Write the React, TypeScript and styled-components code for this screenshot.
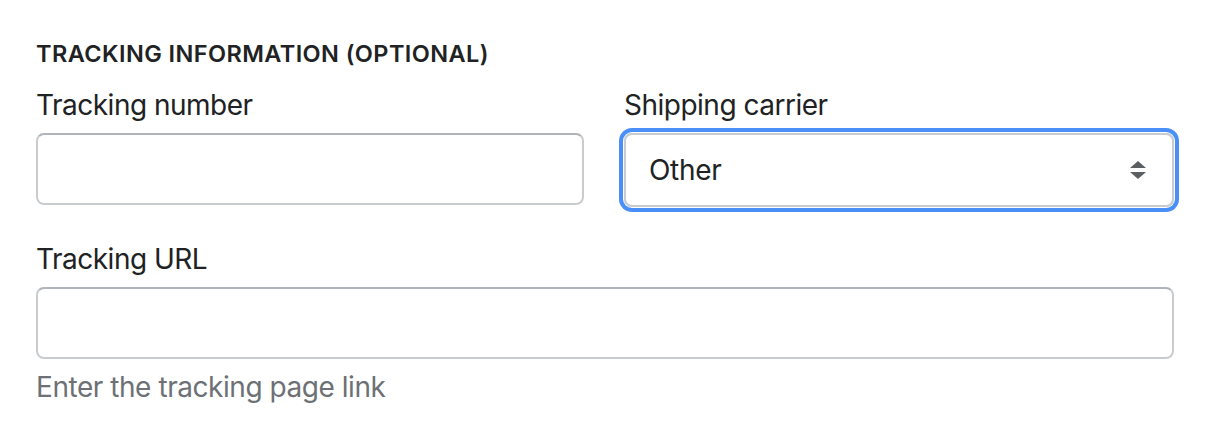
import React from "react";
import styled, { createGlobalStyle } from "styled-components";

const Global = createGlobalStyle`
  html, body { margin: 0; padding: 0; background: #ffffff; }
  body { font-family: Inter, "Noto Sans", "Liberation Sans", sans-serif; color: #202223; }
  * { box-sizing: border-box; }
`;

const Page = styled.div`
  width: 1212px;
  height: 444px;
  padding: 40px 38px 0 36px;
  display: flex;
  flex-direction: column;
`;

const Heading = styled.h2`
  margin: 0 0 17px;
  font-size: 23.5px;
  line-height: 28px;
  font-weight: 600;
  letter-spacing: 0.42px;
  text-transform: uppercase;
`;

const Row = styled.div`
  display: grid;
  grid-template-columns: 548px 1fr;
  column-gap: 40px;
`;

const Field = styled.div<{ $top?: number }>`
  display: flex;
  flex-direction: column;
  margin-top: ${(p) => p.$top ?? 0}px;
`;

const Label = styled.label`
  font-size: 28px;
  line-height: 40px;
  letter-spacing: -0.5px;
  margin-bottom: 8px;
  padding-top: 1px;
  margin-top: -1px;
`;

const Input = styled.input`
  height: 72px;
  width: 100%;
  border: 2px solid #c9cccf;
  border-top-color: #aeb4b9;
  border-radius: 8px;
  background: #fff;
  padding: 0 24px;
  font: inherit;
  font-size: 28px;
  outline: none;
`;

const SelectWrap = styled.div`
  position: relative;
  height: 74px;
  border-radius: 8px;
  box-shadow: 0 0 0 1px #ffffff, 0 0 0 5px #4a8ff7;
`;

const Select = styled.select`
  appearance: none;
  -webkit-appearance: none;
  width: 100%;
  height: 100%;
  border: 2px solid #c9cccf;
  border-radius: 8px;
  background: #fff;
  padding: 0 60px 0 23px;
  font: inherit;
  font-size: 28px;
  letter-spacing: -0.3px;
  color: #202223;
  outline: none;
`;

const Arrows = styled.svg`
  position: absolute;
  right: 27px;
  top: 50%;
  transform: translateY(-50%);
  pointer-events: none;
`;

const Help = styled.div`
  margin-top: 8px;
  font-size: 28px;
  line-height: 40px;
  letter-spacing: -0.45px;
  color: #6d7175;
`;

export default function App() {
  return (
    <>
      <Global />
      <Page>
        <Heading>Tracking information (optional)</Heading>
        <Row>
          <Field>
            <Label htmlFor="tn">Tracking number</Label>
            <Input id="tn" type="text" />
          </Field>
          <Field>
            <Label htmlFor="sc">Shipping carrier</Label>
            <SelectWrap>
              <Select id="sc" defaultValue="other">
                <option value="other">Other</option>
              </Select>
              <Arrows width="18" height="22" viewBox="0 0 18 22">
                <path d="M9 2 L17 9 L1 9 Z" fill="#5c5f62" />
                <path d="M1 13 L17 13 L9 20 Z" fill="#5c5f62" />
              </Arrows>
            </SelectWrap>
          </Field>
        </Row>
        <Field $top={32}>
          <Label htmlFor="tu">Tracking URL</Label>
          <Input id="tu" type="text" />
          <Help>Enter the tracking page link</Help>
        </Field>
      </Page>
    </>
  );
}
